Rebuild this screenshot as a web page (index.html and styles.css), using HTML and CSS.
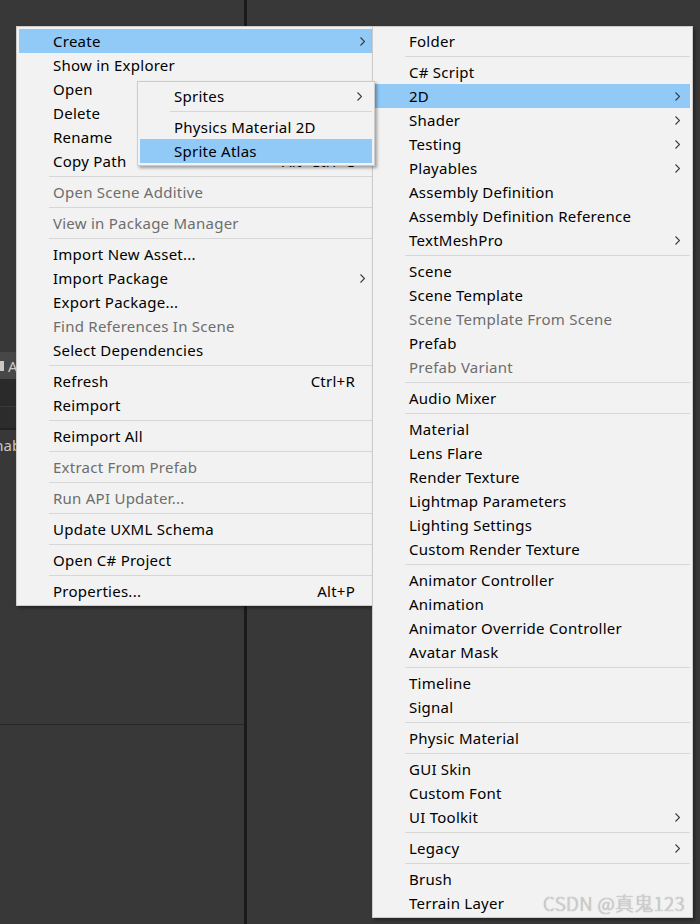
FILE: index.html
```html
<!DOCTYPE html>
<html>
<head>
<meta charset="utf-8">
<link rel="stylesheet" href="styles.css">
</head>
<body>
<div class="desk">
  <div class="left">
    <div class="lp-blank"></div>
    <div class="lp-bar"><span class="lp-ico"></span><span class="lp-txt">Assets</span></div>
    <div class="lp-band1"></div>
    <div class="lp-line1"></div>
    <div class="lp-band2"></div>
    <div class="lp-line2"></div>
    <div class="lp-label"><span>Enable</span></div>
    <div class="lp-fill"></div>
    <div class="lp-hline"></div>
    <div class="lp-bottom"></div>
  </div>
  <div class="divider"></div>
  <div class="right"></div>
</div>

<div class="menu main-menu">
  <div class="item hl"><span class="label">Create</span><svg class="chev" viewBox="0 0 5 9" width="5" height="9"><polyline points="0.5,0.5 4.5,4.5 0.5,8.5"/></svg></div>
  <div class="item"><span class="label">Show in Explorer</span></div>
  <div class="item"><span class="label">Open</span></div>
  <div class="item"><span class="label">Delete</span></div>
  <div class="item"><span class="label">Rename</span></div>
  <div class="item"><span class="label">Copy Path</span><span class="sc">Alt+Ctrl+C</span></div>
  <div class="sep"></div>
  <div class="item dis"><span class="label">Open Scene Additive</span></div>
  <div class="sep"></div>
  <div class="item dis"><span class="label">View in Package Manager</span></div>
  <div class="sep"></div>
  <div class="item"><span class="label">Import New Asset...</span></div>
  <div class="item"><span class="label">Import Package</span><svg class="chev" viewBox="0 0 5 9" width="5" height="9"><polyline points="0.5,0.5 4.5,4.5 0.5,8.5"/></svg></div>
  <div class="item"><span class="label">Export Package...</span></div>
  <div class="item dis"><span class="label">Find References In Scene</span></div>
  <div class="item"><span class="label">Select Dependencies</span></div>
  <div class="sep"></div>
  <div class="item"><span class="label">Refresh</span><span class="sc">Ctrl+R</span></div>
  <div class="item"><span class="label">Reimport</span></div>
  <div class="sep"></div>
  <div class="item"><span class="label">Reimport All</span></div>
  <div class="sep"></div>
  <div class="item dis"><span class="label">Extract From Prefab</span></div>
  <div class="sep"></div>
  <div class="item dis"><span class="label">Run API Updater...</span></div>
  <div class="sep"></div>
  <div class="item"><span class="label">Update UXML Schema</span></div>
  <div class="sep"></div>
  <div class="item"><span class="label">Open C# Project</span></div>
  <div class="sep"></div>
  <div class="item"><span class="label">Properties...</span><span class="sc">Alt+P</span></div>
</div>

<div class="menu create-menu">
  <div class="item"><span class="label">Folder</span></div>
  <div class="sep"></div>
  <div class="item"><span class="label">C# Script</span></div>
  <div class="item hl"><span class="label">2D</span><svg class="chev" viewBox="0 0 5 9" width="5" height="9"><polyline points="0.5,0.5 4.5,4.5 0.5,8.5"/></svg></div>
  <div class="item"><span class="label">Shader</span><svg class="chev" viewBox="0 0 5 9" width="5" height="9"><polyline points="0.5,0.5 4.5,4.5 0.5,8.5"/></svg></div>
  <div class="item"><span class="label">Testing</span><svg class="chev" viewBox="0 0 5 9" width="5" height="9"><polyline points="0.5,0.5 4.5,4.5 0.5,8.5"/></svg></div>
  <div class="item"><span class="label">Playables</span><svg class="chev" viewBox="0 0 5 9" width="5" height="9"><polyline points="0.5,0.5 4.5,4.5 0.5,8.5"/></svg></div>
  <div class="item"><span class="label">Assembly Definition</span></div>
  <div class="item"><span class="label">Assembly Definition Reference</span></div>
  <div class="item"><span class="label">TextMeshPro</span><svg class="chev" viewBox="0 0 5 9" width="5" height="9"><polyline points="0.5,0.5 4.5,4.5 0.5,8.5"/></svg></div>
  <div class="sep"></div>
  <div class="item"><span class="label">Scene</span></div>
  <div class="item"><span class="label">Scene Template</span></div>
  <div class="item dis"><span class="label">Scene Template From Scene</span></div>
  <div class="item"><span class="label">Prefab</span></div>
  <div class="item dis"><span class="label">Prefab Variant</span></div>
  <div class="sep"></div>
  <div class="item"><span class="label">Audio Mixer</span></div>
  <div class="sep"></div>
  <div class="item"><span class="label">Material</span></div>
  <div class="item"><span class="label">Lens Flare</span></div>
  <div class="item"><span class="label">Render Texture</span></div>
  <div class="item"><span class="label">Lightmap Parameters</span></div>
  <div class="item"><span class="label">Lighting Settings</span></div>
  <div class="item"><span class="label">Custom Render Texture</span></div>
  <div class="sep"></div>
  <div class="item"><span class="label">Animator Controller</span></div>
  <div class="item"><span class="label">Animation</span></div>
  <div class="item"><span class="label">Animator Override Controller</span></div>
  <div class="item"><span class="label">Avatar Mask</span></div>
  <div class="sep"></div>
  <div class="item"><span class="label">Timeline</span></div>
  <div class="item"><span class="label">Signal</span></div>
  <div class="sep"></div>
  <div class="item"><span class="label">Physic Material</span></div>
  <div class="sep"></div>
  <div class="item"><span class="label">GUI Skin</span></div>
  <div class="item"><span class="label">Custom Font</span></div>
  <div class="item"><span class="label">UI Toolkit</span><svg class="chev" viewBox="0 0 5 9" width="5" height="9"><polyline points="0.5,0.5 4.5,4.5 0.5,8.5"/></svg></div>
  <div class="sep"></div>
  <div class="item"><span class="label">Legacy</span><svg class="chev" viewBox="0 0 5 9" width="5" height="9"><polyline points="0.5,0.5 4.5,4.5 0.5,8.5"/></svg></div>
  <div class="sep"></div>
  <div class="item"><span class="label">Brush</span></div>
  <div class="item"><span class="label">Terrain Layer</span></div>
</div>

<div class="menu sprite-menu">
  <div class="item"><span class="label">Sprites</span><svg class="chev" viewBox="0 0 5 9" width="5" height="9"><polyline points="0.5,0.5 4.5,4.5 0.5,8.5"/></svg></div>
  <div class="sep"></div>
  <div class="item"><span class="label">Physics Material 2D</span></div>
  <div class="item hl"><span class="label">Sprite Atlas</span></div>
</div>

<div class="watermark">CSDN @真鬼123</div>
</body>
</html>
```

FILE: styles.css
```css
html, body {
  margin: 0;
  padding: 0;
}
body {
  width: 700px;
  height: 924px;
  overflow: hidden;
  position: relative;
  background: #383838;
  font-family: "Noto Sans", "Noto Sans CJK SC", sans-serif;
}
.desk {
  display: flex;
  height: 924px;
}
.left {
  width: 244px;
  display: flex;
  flex-direction: column;
}
.lp-blank { height: 352px; }
.lp-bar {
  height: 27px;
  background: #474747;
  display: flex;
  align-items: center;
  gap: 4px;
  color: #c8c8c8;
  font-size: 15px;
}
.lp-ico {
  width: 4px;
  height: 10px;
  background: #c8c8c8;
}
.lp-band1 { height: 27px; background: #2a2a2a; }
.lp-line1 { height: 1px; background: #3a3a3a; }
.lp-band2 { height: 21px; background: #2c2c2c; }
.lp-line2 { height: 2px; background: #222222; }
.lp-label {
  height: 30px;
  display: flex;
  align-items: center;
  color: #c8c8c8;
  font-size: 15px;
}
.lp-label span { margin-left: -14px; }
.lp-fill { height: 264px; }
.lp-hline { height: 1px; background: #262626; }
.lp-bottom { flex: 1; }
.divider {
  width: 3px;
  background: #1a1a1a;
}
.right { flex: 1; }

.menu {
  position: absolute;
  background: #f2f2f2;
  border: 1px solid #cccccc;
  padding: 2px;
  display: flex;
  flex-direction: column;
  box-shadow: 2px 2px 3px rgba(0, 0, 0, 0.35);
  font-size: 15px;
  letter-spacing: 0.25px;
  color: #000;
}
.main-menu {
  left: 16px;
  top: 26px;
  width: 356px;
  z-index: 1;
}
.create-menu {
  left: 372px;
  top: 26px;
  width: 315px;
  z-index: 2;
}
.sprite-menu {
  left: 137px;
  top: 81px;
  width: 232px;
  z-index: 3;
}
.item {
  height: 24px;
  display: flex;
  align-items: center;
  padding-left: 34px;
  position: relative;
  white-space: nowrap;
  line-height: 24px;
}
.item .label { flex: 1; }
.item.hl { background: #91c9f7; }
.item.dis { color: #6d6d6d; }
.sc {
  margin-right: 20px;
}
.chev {
  position: absolute;
  right: 10px;
  top: 8px;
  fill: none;
  stroke: #3a3a3a;
  stroke-width: 1.1;
}
.sep {
  height: 7px;
  display: flex;
  align-items: center;
  padding-left: 30px;
}
.sep::before {
  content: "";
  display: block;
  flex: 1;
  height: 1px;
  background: #d7d7d7;
}
.watermark {
  position: absolute;
  right: 15px;
  bottom: 8px;
  z-index: 5;
  font-family: "Noto Sans CJK SC", "Noto Sans", sans-serif;
  font-size: 19px;
  font-weight: 300;
  color: #d4d4d4;
  text-shadow: 0 0 1px #8a8a8a;
  letter-spacing: 0.3px;
}
```
